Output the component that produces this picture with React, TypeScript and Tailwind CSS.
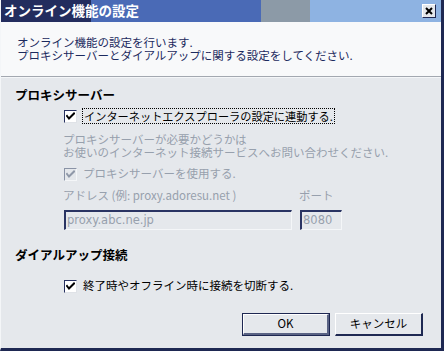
import React from 'react';

const CheckBox: React.FC<{ disabled?: boolean }> = ({ disabled }) => (
  <div
    className={`w-[13px] h-[13px] shrink-0 border-t border-l border-b border-r flex items-center justify-center ${
      disabled
        ? 'bg-[#e4e7eb] border-t-[#8a93a6] border-l-[#8a93a6] border-b-[#f4f6f8] border-r-[#f4f6f8]'
        : 'bg-white border-t-[#263060] border-l-[#263060] border-b-[#dfe2e7] border-r-[#dfe2e7]'
    }`}
  >
    <svg width="9" height="9" viewBox="0 0 9 9">
      <path
        d="M1 4 L3 6.5 L8 1.5"
        fill="none"
        stroke={disabled ? '#8f98a8' : '#000'}
        strokeWidth="2"
        strokeLinecap="square"
      />
    </svg>
  </div>
);

const App: React.FC = () => {
  return (
    <div
      className="w-[444px] h-[351px] flex flex-col bg-[#e5e8ec] border-l border-l-[#f4f6f8] border-r-[3px] border-r-[#1e2852] border-b-[3px] border-b-[#1e2852] overflow-hidden"
      style={{ fontFamily: '"Noto Sans CJK JP", "Noto Sans", sans-serif' }}
    >
      {/* title bar */}
      <div className="h-[22px] shrink-0 flex items-center justify-between pl-[3px] pr-[5px] bg-[linear-gradient(to_right,#232d5e_0_90px,#4a6ab6_90px_260px,#8c9aa7_260px_309px,#8eb3e2_309px)]">
        <span className="text-white font-bold text-[13.5px] leading-none">オンライン機能の設定</span>
        <div className="w-[14px] h-[14px] bg-[#e5e8ec] border-t border-l border-white border-b border-r border-b-[#1e2852] border-r-[#1e2852] flex items-center justify-center">
          <svg width="8" height="8" viewBox="0 0 8 8">
            <path d="M1 1 L7 7 M7 1 L1 7" stroke="#000" strokeWidth="2" />
          </svg>
        </div>
      </div>

      {/* header */}
      <div className="h-[54px] shrink-0 bg-[#f8f9fa] pl-[16px] pt-[14px] text-[11.5px] leading-[13px] text-[#1c2a5e]">
        <div>オンライン機能の設定を行います.</div>
        <div>プロキシサーバーとダイアルアップに関する設定をしてください.</div>
      </div>
      <div className="h-px shrink-0 bg-[#a3a8b0]" />
      <div className="h-px shrink-0 bg-[#f4f6f8]" />

      {/* body */}
      <div className="flex-1 flex flex-col text-[11.5px] text-black">
        <div className="mt-[9px] ml-[14px] h-[16px] leading-[16px] font-bold text-[12.5px]">プロキシサーバー</div>

        <div className="mt-[4px] ml-[63px] h-[18px] flex items-center gap-[5px]">
          <CheckBox />
          <span className="border border-dotted border-black px-px leading-[14px] text-[11.2px]">
            インターネットエクスプローラの設定に連動する.
          </span>
        </div>

        <div className="mt-[8px] ml-[62px] leading-[13px] text-[#97a0ad]">
          <div>プロキシサーバーが必要かどうかは</div>
          <div>お使いのインターネット接続サービスへお問い合わせください.</div>
        </div>

        <div className="mt-[6px] ml-[63px] h-[18px] flex items-center gap-[6px] text-[#97a0ad]">
          <CheckBox disabled />
          <span>プロキシサーバーを使用する.</span>
        </div>

        <div className="mt-[4px] ml-[62px] h-[16px] leading-[16px] flex text-[#97a0ad]">
          <span className="w-[236px]">アドレス (例: proxy.adoresu.net )</span>
          <span>ポート</span>
        </div>

        <div className="mt-[7px] ml-[63px] flex gap-[8px]">
          <div
            className="w-[228px] h-[20px] border-t-2 border-l-2 border-t-[#2a3463] border-l-[#2a3463] border-b border-r border-b-[#f4f6f8] border-r-[#f4f6f8] flex items-center pl-px text-[#97a0ad]"
            style={{ fontFamily: '"DejaVu Sans", sans-serif', fontSize: '11.5px' }}
          >
            proxy.abc.ne.jp
          </div>
          <div
            className="w-[42px] h-[20px] border-t-2 border-l-2 border-t-[#2a3463] border-l-[#2a3463] border-b border-r border-b-[#f4f6f8] border-r-[#f4f6f8] flex items-center pl-px text-[#97a0ad]"
            style={{ fontFamily: '"DejaVu Sans", sans-serif', fontSize: '11.5px' }}
          >
            8080
          </div>
        </div>

        <div className="mt-[17px] ml-[14px] h-[16px] leading-[16px] font-bold text-[12.5px]">ダイアルアップ接続</div>

        <div className="mt-[14px] ml-[63px] h-[18px] flex items-center gap-[6px]">
          <CheckBox />
          <span>終了時やオフライン時に接続を切断する.</span>
        </div>

        <div className="mt-[18px] flex justify-end gap-[5px] pr-[18px]">
          <button className="w-[88px] h-[23px] bg-[#e5e8ec] border border-[#1e2852] flex items-stretch p-0">
            <span className="flex-1 flex items-center justify-center border-t border-l border-t-white border-l-white border-b-2 border-r-2 border-b-[#5a6384] border-r-[#5a6384] text-[11.5px]">
              OK
            </span>
          </button>
          <button className="w-[88px] h-[23px] bg-[#e5e8ec] border-t border-l border-t-white border-l-white border-b-2 border-r-2 border-b-[#1e2852] border-r-[#1e2852] flex items-center justify-center text-[11.5px]">
            キャンセル
          </button>
        </div>
      </div>
    </div>
  );
};

export default App;
